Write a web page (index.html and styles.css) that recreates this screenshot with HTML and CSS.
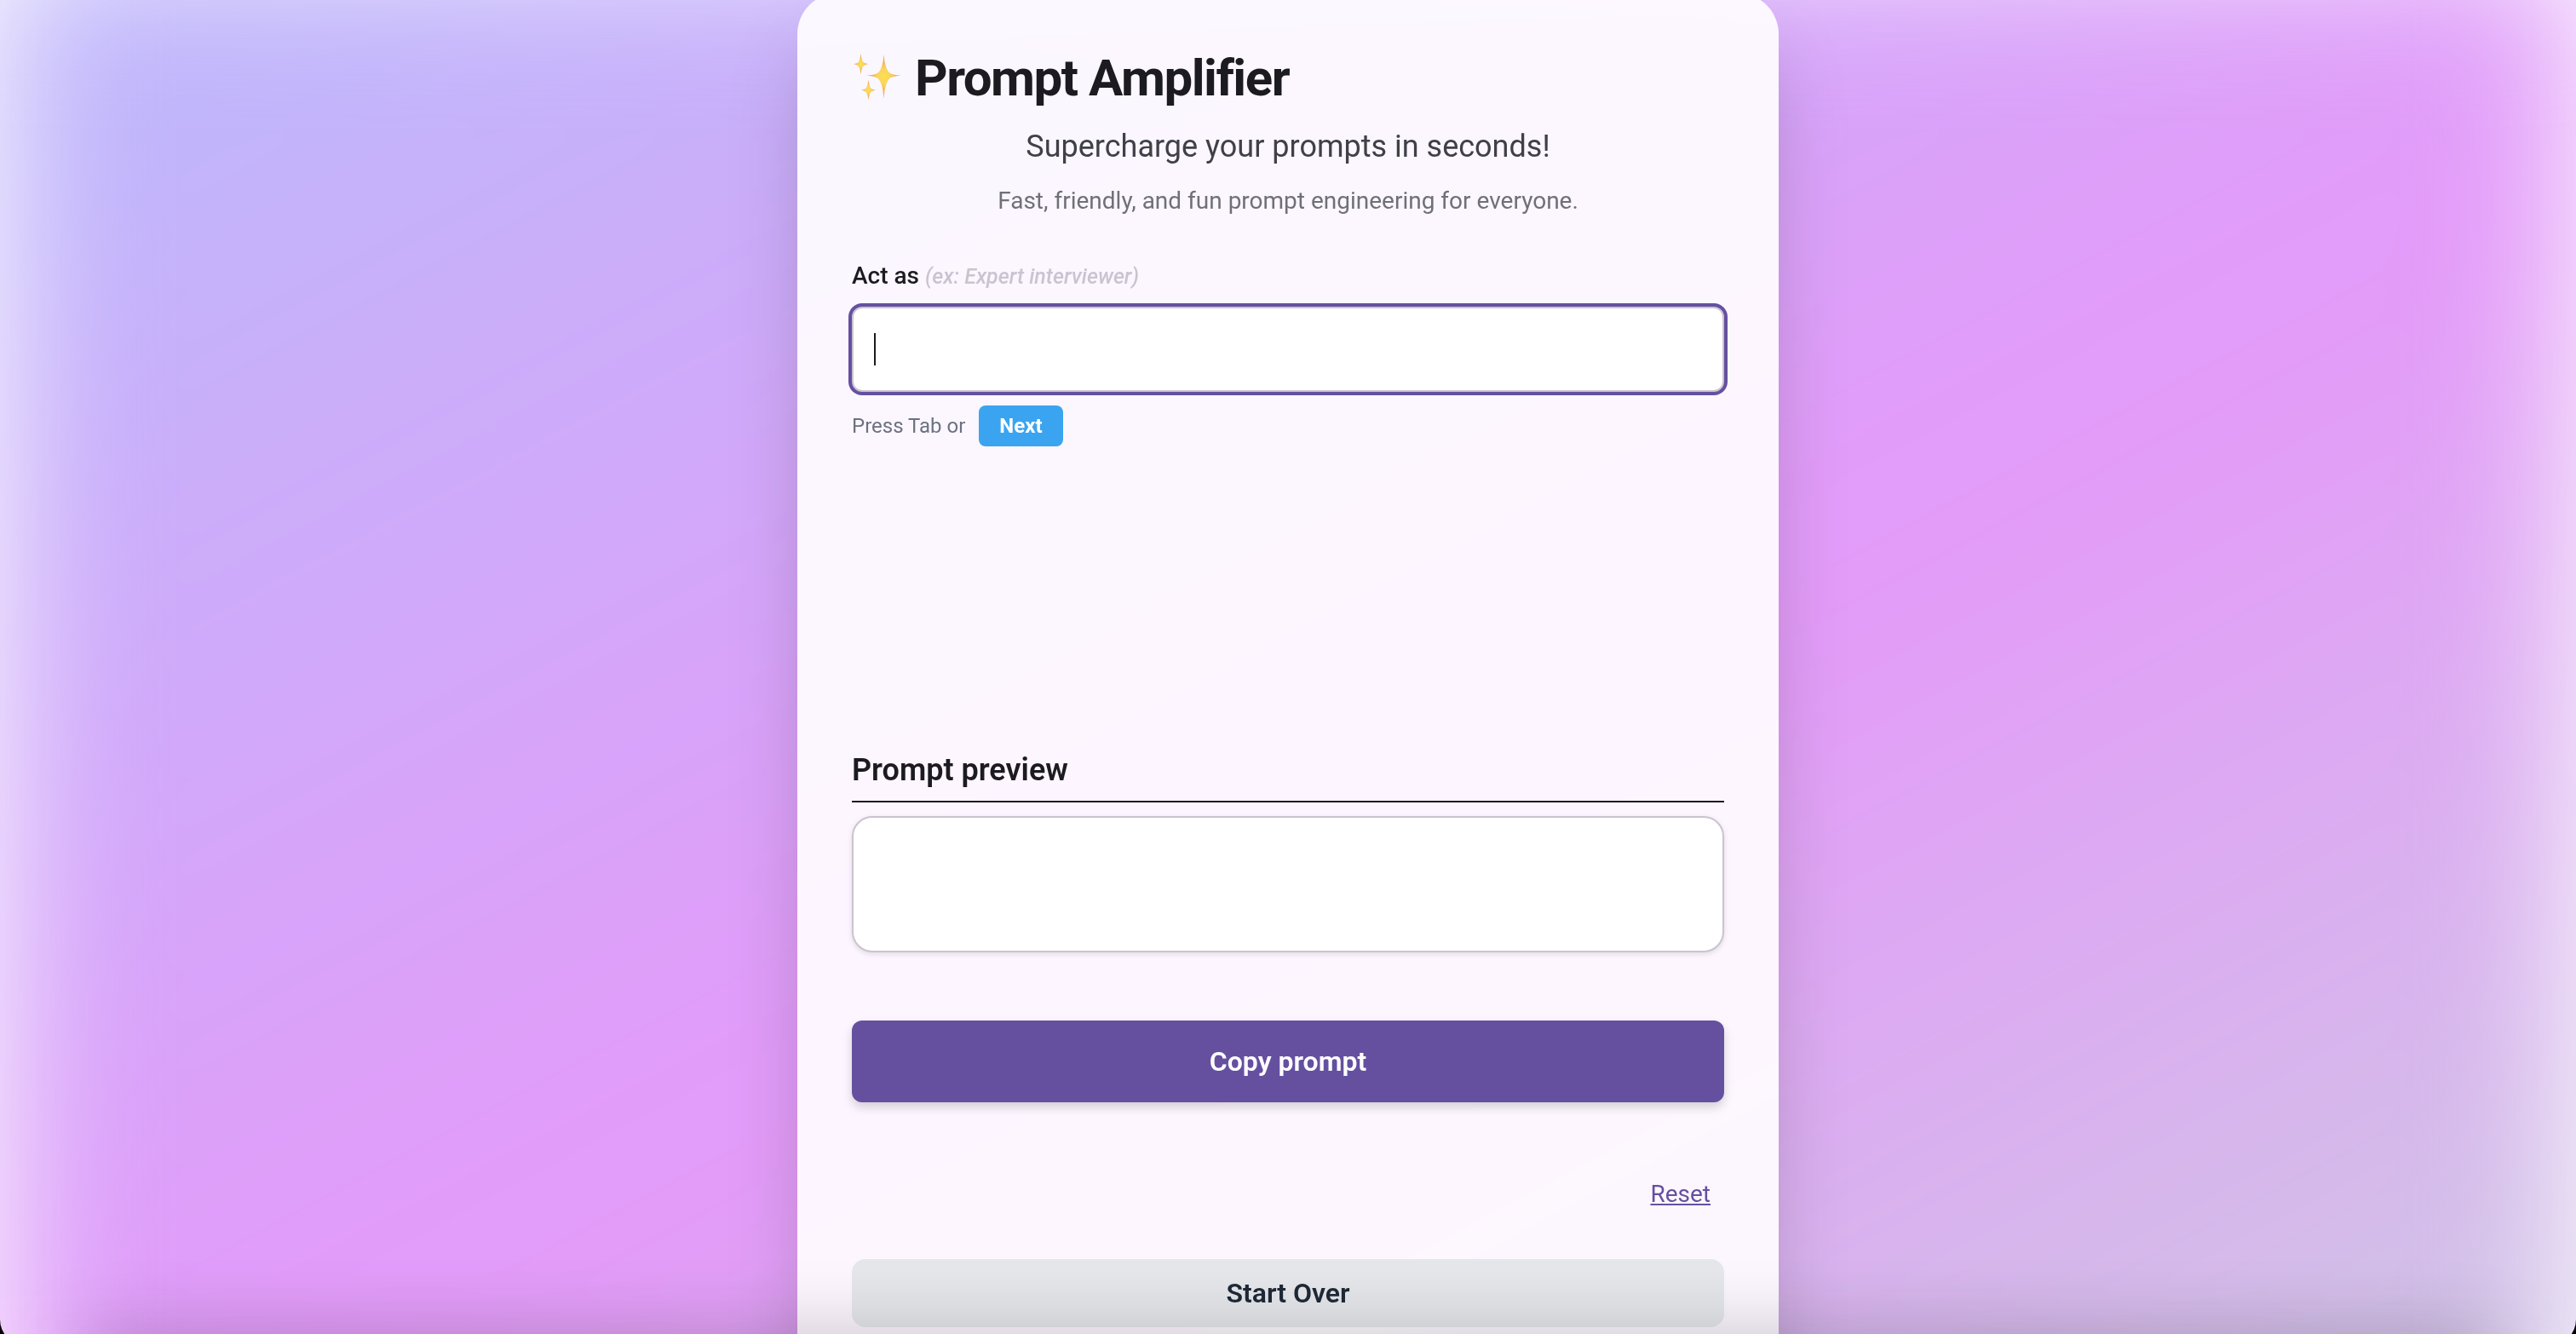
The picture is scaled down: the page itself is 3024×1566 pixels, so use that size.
FILE: index.html
```html
<!DOCTYPE html>
<html lang="en">
<head>
<meta charset="utf-8">
<meta name="viewport" content="width=device-width, initial-scale=1">
<title>Prompt Amplifier</title>
<link rel="stylesheet" href="styles.css">
</head>
<body>
<div class="backdrop" aria-hidden="true"></div>
<div class="page">
  <main class="card">
    <header class="header">
      <h1 class="title">
        <svg class="sparkles" viewBox="0 0 60 60" aria-hidden="true">
          <defs>
            <radialGradient id="gold">
              <stop offset="0" stop-color="#fbe04e"/>
              <stop offset="0.35" stop-color="#f9d560"/>
              <stop offset="1" stop-color="#ec9355"/>
            </radialGradient>
          </defs>
          <g fill="url(#gold)">
            <path d="M37.500 2C38.500 14 41 21.500 45 24Q49 26 58 26.500Q49 27.500 45 29.500C41 33 38.500 40 37.500 54C36.500 40 34 33 30 29.500Q26 27.500 17 26.500Q26 26 30 24C34 21.500 36.500 14 37.500 2Z"/>
            <path d="M10.500 1Q11.500 8 13 10.500Q14.500 12.500 19 13Q14.500 14 13 16Q11.500 18.500 10.500 25Q9.500 18.500 8 16Q6.500 14 2 13Q6.500 12.500 8 10.500Q9.500 8 10.500 1Z"/>
            <path d="M19.500 32Q20.500 38.500 22 41Q23.500 43 28 43.500Q23.500 44.500 22 46.500Q20.500 49 19.500 55Q18.500 49 17 46.500Q15.500 44.500 11 43.500Q15.500 43 17 41Q18.500 38.500 19.500 32Z"/>
          </g>
        </svg>
        Prompt Amplifier
      </h1>
      <p class="tagline">Supercharge your prompts in seconds!</p>
      <p class="subline">Fast, friendly, and fun prompt engineering for everyone.</p>
    </header>

    <form class="step">
      <label class="label" for="act-as">Act as <span class="hint">(ex: Expert interviewer)</span></label>
      <div class="field">
        <input class="input" id="act-as" type="text" autocomplete="off">
        <span class="caret" aria-hidden="true"></span>
      </div>
      <div class="advance">
        <span>Press Tab or</span>
        <button class="next" type="button">Next</button>
      </div>
    </form>

    <section class="preview">
      <h2 class="preview-title"><label for="preview">Prompt preview</label></h2>
      <textarea class="preview-box" id="preview" readonly></textarea>
    </section>

    <button class="copy" type="button">Copy prompt</button>
    <a class="reset" href="#">Reset</a>
    <button class="restart" type="button">Start Over</button>
  </main>
</div>
<div class="dock-shadow" aria-hidden="true"></div>
<div class="window-frame" aria-hidden="true"></div>
</body>
</html>
```
FILE: styles.css
```css
* {
  box-sizing: border-box;
}

body {
  margin: 0;
  background: #fff;
  color: #1c1b1f;
  font-family: Roboto, "Liberation Sans", sans-serif;
}

button,
input,
textarea {
  font-family: inherit;
  border: 0;
}

/* Soft colour wash behind the card */
.backdrop {
  position: fixed;
  inset: -60px -4px -160px;
  background: linear-gradient(152deg, #c0b6fb 8%, #e49af9 55%, #d0c4e6 96%);
  filter: blur(88px);
}

.page {
  position: relative;
  height: 100vh;
  overflow: hidden;
}

.card {
  display: flex;
  flex-direction: column;
  width: 100%;
  max-width: 1152px;
  margin: -8px auto 0;
  padding: 64px 64px 128px;
  border-radius: 48px;
  background: rgba(255, 253, 255, 0.92);
  box-shadow: 0 50px 100px -24px rgba(0, 0, 0, 0.25);
}

.header {
  display: flex;
  flex-direction: column;
  gap: 16px;
  margin-bottom: 48px;
}

.title {
  display: flex;
  align-items: center;
  gap: 14px;
  margin: 0;
  font-size: 60px;
  line-height: 72px;
  font-weight: 700;
  letter-spacing: -0.025em;
}

.sparkles {
  width: 60px;
  height: 60px;
}

.tagline,
.subline {
  margin: 0;
  text-align: center;
}

.tagline {
  font-size: 36px;
  line-height: 56px;
  color: #3f4146;
}

.subline {
  font-size: 28px;
  line-height: 40px;
  color: #6f7177;
}

.step {
  display: flex;
  flex-direction: column;
  gap: 16px;
  min-height: 540px;
  margin-bottom: 32px;
}

.label {
  font-size: 28px;
  line-height: 40px;
  font-weight: 500;
}

.hint {
  font-size: 25px;
  line-height: 1;
  font-style: italic;
  color: #cac4d0;
}

.field {
  position: relative;
}

.input {
  display: block;
  width: 100%;
  height: 100px;
  padding: 24px;
  border: 2px solid #cac4d0;
  border-radius: 12px;
  background: #fff;
  font-size: 32px;
  outline: 0;
  box-shadow: 0 0 0 4px #6550a0;
}

.caret {
  position: absolute;
  top: 31px;
  left: 26px;
  width: 2px;
  height: 38px;
  background: #1c1b1f;
}

.advance {
  display: flex;
  align-items: center;
  gap: 16px;
  font-size: 24px;
  line-height: 32px;
  color: #6b7280;
}

.next {
  padding: 8px 24px;
  border-radius: 8px;
  background: #3ba4f0;
  color: #fff;
  font-size: 24px;
  line-height: 32px;
  font-weight: 700;
}

.preview {
  display: flex;
  flex-direction: column;
  gap: 16px;
  margin-bottom: 80px;
}

.preview-title {
  margin: 0;
  padding-bottom: 8px;
  border-bottom: 2px solid #1c1b1f;
  font-size: 36px;
  line-height: 56px;
  font-weight: 600;
}

.preview-box {
  display: block;
  width: 100%;
  height: 160px;
  padding: 24px;
  border: 2px solid #cac4d0;
  border-radius: 24px;
  background: #fff;
  font-size: 32px;
  resize: none;
  outline: 0;
  box-shadow: 0 2px 6px rgba(0, 0, 0, 0.12);
}

.copy {
  height: 96px;
  border-radius: 12px;
  background: #6550a0;
  color: #fff;
  font-size: 32px;
  font-weight: 600;
  box-shadow: 0 6px 12px rgba(0, 0, 0, 0.16);
}

.reset {
  align-self: flex-end;
  margin: 72px 0 40px;
  padding: 16px;
  color: #6550a0;
  font-size: 28px;
  line-height: 40px;
  text-decoration: underline;
}

.restart {
  height: 80px;
  border-radius: 16px;
  background: #e5e7eb;
  color: #1f2937;
  font-size: 32px;
  font-weight: 600;
}

/* Shade cast upwards from below the fold */
.dock-shadow {
  position: fixed;
  right: 96px;
  bottom: -68px;
  left: 96px;
  height: 60px;
  box-shadow: 0 0 90px rgba(0, 0, 0, 0.28);
  pointer-events: none;
}

/* Rounded lower corners of the window */
.window-frame {
  position: fixed;
  inset: 0 0 -13px;
  border-radius: 0 0 30px 30px;
  box-shadow: 0 0 0 40px #000;
  pointer-events: none;
}
```
